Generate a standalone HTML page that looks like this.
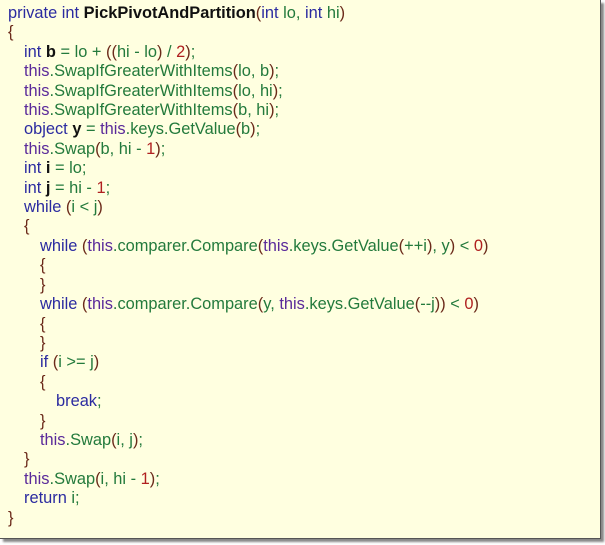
<!DOCTYPE html>
<html><head><meta charset="utf-8"><style>
body{margin:0;background:#fff;width:605px;height:545px;overflow:hidden;position:relative}
.box{position:absolute;left:0;top:0;width:600px;height:538px;background:#ffffe0;border-right:1px solid #555;border-bottom:1px solid #555;box-shadow:3px 3px 2px #888}
.code{position:absolute;left:8px;top:4px;font-family:"Liberation Sans",sans-serif;font-size:16.4px;line-height:19.4px;color:#237a3c;white-space:pre}
.l1{padding-left:16px}.l2{padding-left:32px}.l3{padding-left:48px}
.k{color:#2b2ba0}.t{color:#5a2a9a}.p{color:#6b2a1a}.n{color:#b02020}.b{font-weight:bold;color:#111}
</style></head><body><div class="box"><div class="code"><div><span class="k">private int</span> <span class="b">PickPivotAndPartition</span><span class="p">(</span><span class="k">int</span> lo, <span class="k">int</span> hi<span class="p">)</span></div><div><span class="p">{</span></div><div class="l1"><span class="k">int</span> <span class="b">b</span> = lo + <span class="p">((</span>hi - lo<span class="p">)</span> / <span class="n">2</span><span class="p">)</span>;</div><div class="l1"><span class="t">this</span>.SwapIfGreaterWithItems<span class="p">(</span>lo, b<span class="p">)</span>;</div><div class="l1"><span class="t">this</span>.SwapIfGreaterWithItems<span class="p">(</span>lo, hi<span class="p">)</span>;</div><div class="l1"><span class="t">this</span>.SwapIfGreaterWithItems<span class="p">(</span>b, hi<span class="p">)</span>;</div><div class="l1"><span class="k">object</span> <span class="b">y</span> = <span class="t">this</span>.keys.GetValue<span class="p">(</span>b<span class="p">)</span>;</div><div class="l1"><span class="t">this</span>.Swap<span class="p">(</span>b, hi - <span class="n">1</span><span class="p">)</span>;</div><div class="l1"><span class="k">int</span> <span class="b">i</span> = lo;</div><div class="l1"><span class="k">int</span> <span class="b">j</span> = hi - <span class="n">1</span>;</div><div class="l1"><span class="k">while</span> <span class="p">(</span>i &lt; j<span class="p">)</span></div><div class="l1"><span class="p">{</span></div><div class="l2"><span class="k">while</span> <span class="p">(</span><span class="t">this</span>.comparer.Compare<span class="p">(</span><span class="t">this</span>.keys.GetValue<span class="p">(</span>++i<span class="p">)</span>, y<span class="p">)</span> &lt; <span class="n">0</span><span class="p">)</span></div><div class="l2"><span class="p">{</span></div><div class="l2"><span class="p">}</span></div><div class="l2"><span class="k">while</span> <span class="p">(</span><span class="t">this</span>.comparer.Compare<span class="p">(</span>y, <span class="t">this</span>.keys.GetValue<span class="p">(</span>--j<span class="p">))</span> &lt; <span class="n">0</span><span class="p">)</span></div><div class="l2"><span class="p">{</span></div><div class="l2"><span class="p">}</span></div><div class="l2"><span class="k">if</span> <span class="p">(</span>i &gt;= j<span class="p">)</span></div><div class="l2"><span class="p">{</span></div><div class="l3"><span class="k">break</span>;</div><div class="l2"><span class="p">}</span></div><div class="l2"><span class="t">this</span>.Swap<span class="p">(</span>i, j<span class="p">)</span>;</div><div class="l1"><span class="p">}</span></div><div class="l1"><span class="t">this</span>.Swap<span class="p">(</span>i, hi - <span class="n">1</span><span class="p">)</span>;</div><div class="l1"><span class="k">return</span> i;</div><div><span class="p">}</span></div></div></div></body></html>
